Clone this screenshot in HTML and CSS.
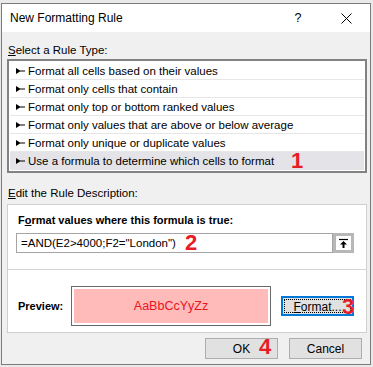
FILE: index.html
```html
<!DOCTYPE html>
<html lang="en">
<head>
  <meta charset="UTF-8" />
  <title>New Formatting Rule</title>
  <link rel="stylesheet" href="styles.css">
</head>
<body>
  <div class="dialog">

    <!-- Title bar -->
    <div class="titlebar">
      <span class="title">New Formatting Rule</span>
      <span class="help">?</span>
      <span class="close">
        <svg width="11" height="11" viewBox="0 0 11 11"><path d="M0.5 0.5 L10.5 10.5 M10.5 0.5 L0.5 10.5" stroke="#000" stroke-width="1" fill="none"/></svg>
      </span>
    </div>

    <div class="content">
      <div class="label"><u>S</u>elect a Rule Type:</div>

      <ul class="rule-list">
        <li><svg class="arrow" width="9" height="6" viewBox="0 0 9 6"><path d="M0 0 L4 2.5 L9 2.5 L9 3.5 L4 3.5 L0 6 Z" fill="#000"/></svg>Format all cells based on their values</li>
        <li><svg class="arrow" width="9" height="6" viewBox="0 0 9 6"><path d="M0 0 L4 2.5 L9 2.5 L9 3.5 L4 3.5 L0 6 Z" fill="#000"/></svg>Format only cells that contain</li>
        <li><svg class="arrow" width="9" height="6" viewBox="0 0 9 6"><path d="M0 0 L4 2.5 L9 2.5 L9 3.5 L4 3.5 L0 6 Z" fill="#000"/></svg>Format only top or bottom ranked values</li>
        <li><svg class="arrow" width="9" height="6" viewBox="0 0 9 6"><path d="M0 0 L4 2.5 L9 2.5 L9 3.5 L4 3.5 L0 6 Z" fill="#000"/></svg>Format only values that are above or below average</li>
        <li><svg class="arrow" width="9" height="6" viewBox="0 0 9 6"><path d="M0 0 L4 2.5 L9 2.5 L9 3.5 L4 3.5 L0 6 Z" fill="#000"/></svg>Format only unique or duplicate values</li>
        <li class="selected"><svg class="arrow" width="9" height="6" viewBox="0 0 9 6"><path d="M0 0 L4 2.5 L9 2.5 L9 3.5 L4 3.5 L0 6 Z" fill="#000"/></svg>Use a formula to determine which cells to format<span class="mark mark-1">1</span></li>
      </ul>

      <div class="label label-edit"><u>E</u>dit the Rule Description:</div>

      <div class="desc">
        <div class="desc-title">F<u>o</u>rmat values where this formula is true:</div>

        <div class="formula-row">
          <div class="formula">=AND(E2&gt;4000;F2="London")</div>
          <div class="collapse-btn">
            <svg width="11" height="11" viewBox="0 0 11 11"><path d="M1 1.5 H10" stroke="#000" stroke-width="1.2"/><path d="M5.5 3 L2 6.5 H4.5 V10 H6.5 V6.5 H9 Z" fill="#000"/></svg>
          </div>
          <span class="mark mark-2">2</span>
        </div>

        <div class="divider"></div>

        <div class="preview-row">
          <span class="preview-label">Preview:</span>
          <div class="preview">
            <div class="preview-fill">AaBbCcYyZz</div>
          </div>
          <button class="btn format-btn"><span class="focus"><u>F</u>ormat...</span><span class="mark mark-3">3</span></button>
        </div>
      </div>

      <div class="actions">
        <button class="btn ok-btn">OK<span class="mark mark-4">4</span></button>
        <button class="btn">Cancel</button>
      </div>
    </div>

  </div>
</body>
</html>
```

FILE: styles.css
```css
body, html {
  margin: 0;
  padding: 0;
  background-color: #e9e9e9;
  font-family: "Liberation Sans", Arial, sans-serif;
  font-size: 11.5px;
  color: #000;
}

.dialog {
  box-sizing: border-box;
  width: 370px;
  height: 362px;
  margin: 3px 0 0 1px;
  border: 1px solid #7c7c7c;
  background-color: #f0f0f0;
}

.titlebar {
  display: flex;
  align-items: center;
  height: 28px;
  background-color: #fff;
}

.title {
  padding-left: 8px;
  font-size: 12px;
}

.help {
  margin-left: auto;
  width: 12px;
  text-align: center;
  font-size: 12.5px;
}

.close {
  display: flex;
  justify-content: center;
  width: 47px;
  margin-left: 19px;
}

.content {
  padding: 0 3px 0 5px;
}

.label {
  line-height: 16px;
  height: 16px;
  margin-top: 10px;
  padding-left: 1px;
}

.label-edit {
  margin-top: 12px;
}

.rule-list {
  list-style: none;
  margin: 1px 0 0 0;
  padding: 1px;
  border: 2px solid #828282;
  background-color: #fff;
}

.rule-list li {
  position: relative;
  display: flex;
  align-items: center;
  height: 17px;
  border-bottom: 1px solid #e6e6e6;
  padding-left: 6px;
}

.rule-list li.selected {
  background-color: #e3e3e8;
  border-bottom-color: #e3e3e8;
}

.arrow {
  margin-right: 3px;
  flex-shrink: 0;
}

.mark {
  position: absolute;
  font-family: "Liberation Sans", Arial, sans-serif;
  font-weight: bold;
  font-size: 22px;
  line-height: 22px;
  color: #e81c24;
}

.mark-1 { left: 281px; top: -2px; }
.mark-2 { left: 169px; top: -1px; }
.mark-3 { left: 59px; top: -2px; }
.mark-4 { left: 53px; top: -3px; }

.desc {
  margin-top: 3px;
  border: 1px solid #cfcfcf;
  background-color: #fff;
  padding: 7px 0 6px 0;
}

.desc-title {
  font-weight: bold;
  font-size: 11px;
  line-height: 16px;
  padding-left: 10px;
}

.formula-row {
  position: relative;
  display: flex;
  margin: 5px 0 0 8px;
  height: 20px;
}

.formula {
  box-sizing: border-box;
  width: 317px;
  height: 20px;
  border: 1px solid #a5a5a5;
  padding-left: 4px;
  line-height: 18px;
  font-size: 11.5px;
}

.collapse-btn {
  box-sizing: border-box;
  width: 21px;
  height: 20px;
  border: 3px solid #b7b7b7;
  background-color: #fff;
  display: flex;
  align-items: center;
  justify-content: center;
}

.divider {
  height: 1px;
  background-color: #d4d4d4;
  margin-top: 16px;
}

.preview-row {
  display: flex;
  align-items: center;
  margin-top: 16px;
  padding-left: 10px;
}

.preview-label {
  width: 53px;
  font-weight: bold;
  font-size: 11px;
}

.preview {
  box-sizing: border-box;
  width: 200px;
  height: 40px;
  border: 1px solid #6a6a6a;
  padding: 2px;
}

.preview-fill {
  height: 100%;
  background-color: #ffbaba;
  display: flex;
  align-items: center;
  justify-content: center;
  color: #e8141c;
  font-family: "Liberation Sans", Arial, sans-serif;
  font-size: 12.5px;
}

.btn {
  position: relative;
  box-sizing: border-box;
  width: 73px;
  height: 21px;
  border: 1px solid #adadad;
  background-color: #e1e1e1;
  font-family: "Liberation Sans", Arial, sans-serif;
  font-size: 12px;
  color: #000;
  padding: 0;
}

.format-btn {
  margin-left: 10px;
  height: 20px;
  border: 2px solid #0078d7;
  padding: 1px;
}

.format-btn .focus {
  display: block;
  height: 100%;
  box-sizing: border-box;
  border: 1px dotted #000;
  line-height: 14px;
}

.actions {
  display: flex;
  justify-content: flex-end;
  gap: 11px;
  margin-top: 5px;
  padding-right: 5px;
}
```
